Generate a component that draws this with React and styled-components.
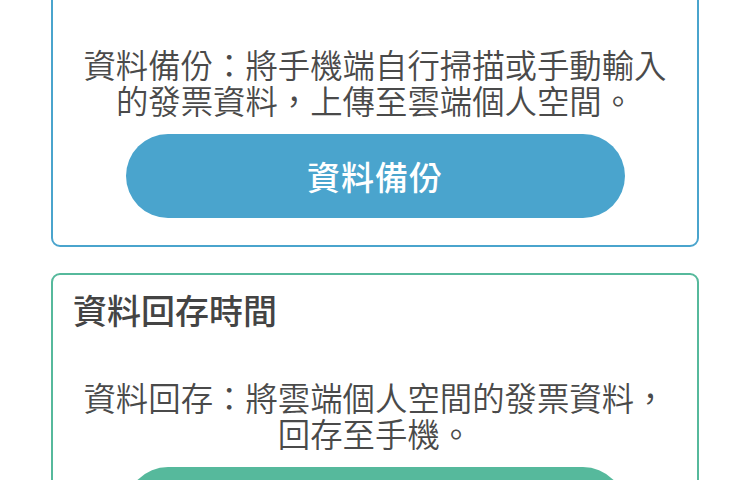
import React from 'react';
import styled, { createGlobalStyle } from 'styled-components';

const GlobalStyle = createGlobalStyle`
  html, body {
    margin: 0;
    padding: 0;
    background: #fff;
    overflow: hidden;
  }
  body {
    font-family: "Noto Sans CJK TC", "Noto Sans", sans-serif;
  }
`;

// Page offset: the list is scrolled so the first card's head is above the view
const Page = styled.div`
  width: 750px;
  margin-top: -60px;
  display: flex;
  flex-direction: column;
  gap: 26px;
  padding: 0 51px;
  box-sizing: border-box;
`;

const Card = styled.div`
  border: 2px solid ${(p) => p.color};
  border-radius: 9px;
  padding: 15px 20px 27px;
  display: flex;
  flex-direction: column;
  background: #fff;
`;

const Title = styled.div`
  font-size: 34px;
  line-height: 40px;
  font-weight: 500;
  color: #444;
`;

const Body = styled.p`
  margin: 49px 0 0;
  font-size: 32.4px;
  line-height: 36px;
  font-weight: 350;
  color: #4a4a4a;
  text-align: center;
`;

const Button = styled.button`
  margin: 16px auto 0;
  width: 499px;
  height: 84px;
  border: none;
  border-radius: 42px;
  background: ${(p) => p.color};
  color: #fff;
  font-family: inherit;
  font-size: 33px;
  font-weight: 500;
  letter-spacing: 1px;
  cursor: pointer;
`;

const BLUE = '#4aa4cd';
const GREEN = '#56b99c';

const App = () => {
  return (
    <>
      <GlobalStyle />
      <Page>
        <Card color={BLUE}>
          <Title>資料備份時間</Title>
          <Body>
            資料備份：將手機端自行掃描或手動輸入
            <br />
            的發票資料，上傳至雲端個人空間。
          </Body>
          <Button color={BLUE}>資料備份</Button>
        </Card>
        <Card color={GREEN}>
          <Title>資料回存時間</Title>
          <Body>
            資料回存：將雲端個人空間的發票資料，
            <br />
            回存至手機。
          </Body>
          <Button color={GREEN}>資料回存</Button>
        </Card>
      </Page>
    </>
  );
};

export default App;
